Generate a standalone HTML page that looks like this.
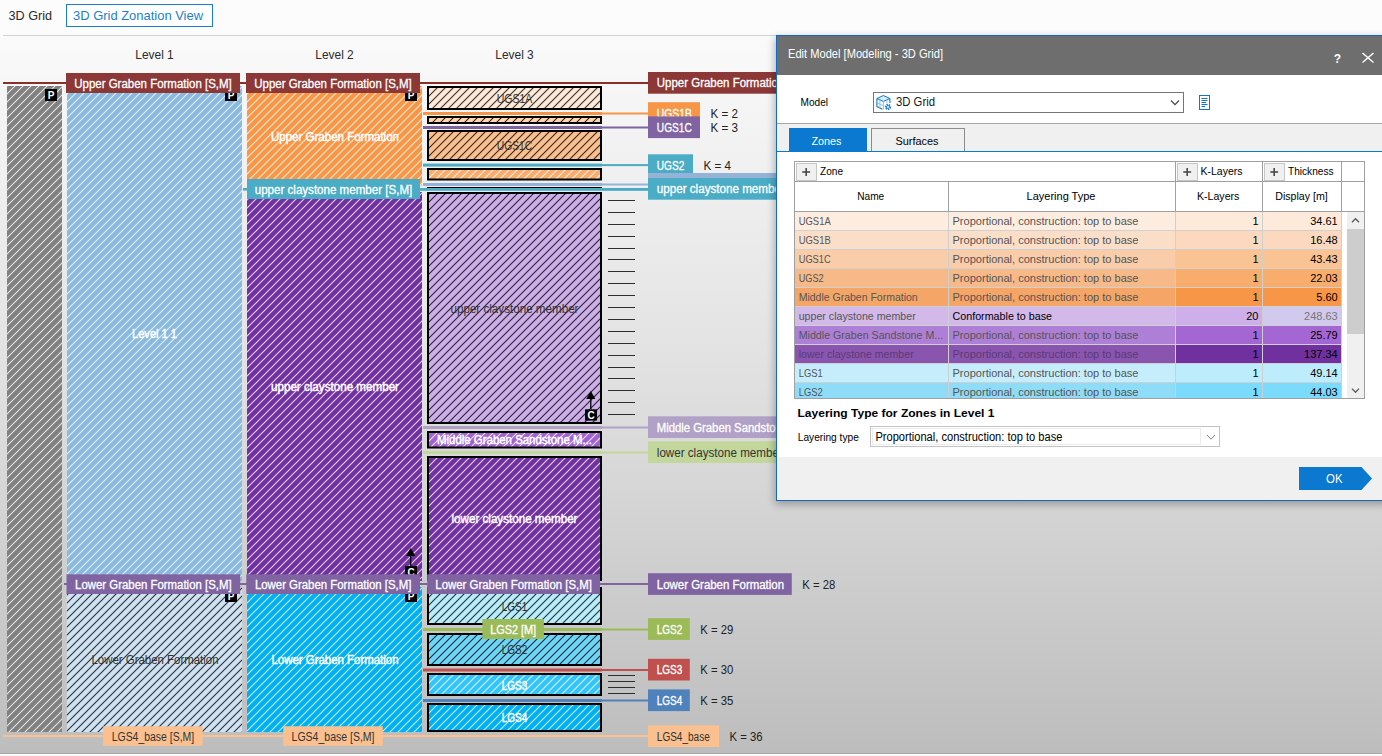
<!DOCTYPE html>
<html lang="en"><head><meta charset="utf-8"><title>3D Grid Zonation View</title>
<style>html,body{margin:0;padding:0;background:#fff;overflow:hidden}svg{display:block;font-family:'Liberation Sans', sans-serif}</style>
</head><body>
<svg width="1382" height="756" viewBox="0 0 1382 756">
<defs>
<linearGradient id="bg" x1="0" y1="0" x2="0" y2="1"><stop offset="0" stop-color="#fafafa"/><stop offset="0.45" stop-color="#e2e2e2"/><stop offset="1" stop-color="#bdbdbd"/></linearGradient>
<pattern id="hw8" width="8" height="8" patternUnits="userSpaceOnUse">
<line x1="8" y1="-8" x2="-16" y2="16" stroke="#ffffff" stroke-width="1.15" stroke-opacity="0.76"/>
<line x1="16" y1="-8" x2="-8" y2="16" stroke="#ffffff" stroke-width="1.15" stroke-opacity="0.76"/>
<line x1="24" y1="-8" x2="0" y2="16" stroke="#ffffff" stroke-width="1.15" stroke-opacity="0.76"/>
</pattern>
<pattern id="hb8" width="8" height="8" patternUnits="userSpaceOnUse">
<line x1="8" y1="-8" x2="-16" y2="16" stroke="#000000" stroke-width="1.1" stroke-opacity="0.8"/>
<line x1="16" y1="-8" x2="-8" y2="16" stroke="#000000" stroke-width="1.1" stroke-opacity="0.8"/>
<line x1="24" y1="-8" x2="0" y2="16" stroke="#000000" stroke-width="1.1" stroke-opacity="0.8"/>
</pattern>
<filter id="sh" x="-5%" y="-5%" width="110%" height="115%"><feGaussianBlur stdDeviation="4"/></filter>
</defs>
<rect x="0" y="0" width="1382" height="756" fill="#fcfcfc" />
<text x="8.5" y="20" font-size="13" fill="#2b2b2b" textLength="43.5" lengthAdjust="spacingAndGlyphs">3D Grid</text>
<rect x="66.5" y="4.5" width="146" height="22" fill="#fff" stroke="#1a7fd2"/>
<text x="73" y="20" font-size="13" fill="#1a7fd2" textLength="130" lengthAdjust="spacingAndGlyphs">3D Grid Zonation View</text>
<rect x="0" y="36" width="1382" height="718" fill="url(#bg)" />
<line x1="3" y1="35.5" x2="1382" y2="35.5" stroke="#d2d2d2" stroke-width="1" />
<line x1="0" y1="753.5" x2="1382" y2="753.5" stroke="#a8a8a8" stroke-width="1" />
<text x="154.5" y="59" font-size="13" fill="#2b2b2b" text-anchor="middle" textLength="38.5" lengthAdjust="spacingAndGlyphs">Level 1</text>
<text x="334.5" y="59" font-size="13" fill="#2b2b2b" text-anchor="middle" textLength="38.5" lengthAdjust="spacingAndGlyphs">Level 2</text>
<text x="514.5" y="59" font-size="13" fill="#2b2b2b" text-anchor="middle" textLength="38.5" lengthAdjust="spacingAndGlyphs">Level 3</text>
<rect x="3" y="82" width="645" height="2" fill="#8b2f2d" />
<rect x="64" y="583" width="584" height="2" fill="#8064a2" />
<rect x="3" y="735" width="645" height="2" fill="#fac090" />
<rect x="243" y="188" width="405" height="2.6" fill="#4bacc6" />
<g transform="translate(7,86)">
<rect x="0" y="0" width="55" height="646" fill="#808080" />
<rect x="0" y="0" width="55" height="646" fill="url(#hw8)" />
</g>
<rect x="45" y="89" width="12" height="12" fill="#000" />
<text x="51" y="99" font-size="10" fill="#fff" text-anchor="middle" font-weight="bold">P</text>
<g transform="translate(67,86)">
<rect x="0" y="0" width="175" height="495" fill="#8ab9df" />
<rect x="0" y="0" width="175" height="495" fill="url(#hw8)" />
</g>
<g transform="translate(67,587)">
<rect x="0" y="0" width="175" height="145" fill="#cfe2f3" />
<rect x="0" y="0" width="175" height="145" fill="url(#hb8)" />
</g>
<rect x="225" y="89" width="12" height="12" fill="#000" />
<text x="231" y="99" font-size="10" fill="#fff" text-anchor="middle" font-weight="bold">P</text>
<rect x="225" y="590" width="12" height="12" fill="#000" />
<text x="231" y="600" font-size="10" fill="#fff" text-anchor="middle" font-weight="bold">P</text>
<text x="154.5" y="337.5" font-size="12" fill="#fff" text-anchor="middle" textLength="45" lengthAdjust="spacingAndGlyphs" stroke="#fff" stroke-width="0.45">Level 1 1</text>
<text x="155" y="664" font-size="12" fill="#333" text-anchor="middle" textLength="127" lengthAdjust="spacingAndGlyphs">Lower Graben Formation</text>
<g transform="translate(247,86)">
<rect x="0" y="0" width="175" height="99.5" fill="#f79646" />
<rect x="0" y="0" width="175" height="99.5" fill="url(#hw8)" />
</g>
<g transform="translate(247,192)">
<rect x="0" y="0" width="175" height="389" fill="#7030a0" />
<rect x="0" y="0" width="175" height="389" fill="url(#hw8)" />
</g>
<g transform="translate(247,587)">
<rect x="0" y="0" width="175" height="145" fill="#00b0f0" />
<rect x="0" y="0" width="175" height="145" fill="url(#hw8)" />
</g>
<rect x="405" y="89" width="12" height="12" fill="#000" />
<text x="411" y="99" font-size="10" fill="#fff" text-anchor="middle" font-weight="bold">P</text>
<rect x="405" y="590" width="12" height="12" fill="#000" />
<text x="411" y="600" font-size="10" fill="#fff" text-anchor="middle" font-weight="bold">P</text>
<line x1="410.7" y1="554" x2="410.7" y2="566" stroke="#000" stroke-width="1.3" />
<path d="M410.7,548 L415.3,556 L406.09999999999997,556 Z" fill="#000"/>
<rect x="405" y="566" width="12" height="12" fill="#000" />
<text x="411" y="576" font-size="10" fill="#fff" text-anchor="middle" font-weight="bold">C</text>
<text x="335" y="141" font-size="12" fill="#fff" text-anchor="middle" textLength="128" lengthAdjust="spacingAndGlyphs" stroke="#fff" stroke-width="0.45">Upper Graben Formation</text>
<text x="335" y="391" font-size="12" fill="#fff" text-anchor="middle" textLength="128" lengthAdjust="spacingAndGlyphs" stroke="#fff" stroke-width="0.45">upper claystone member</text>
<text x="335" y="664" font-size="12" fill="#fff" text-anchor="middle" textLength="127" lengthAdjust="spacingAndGlyphs" stroke="#fff" stroke-width="0.45">Lower Graben Formation</text>
<rect x="423" y="112" width="179" height="3" fill="#f79646" />
<rect x="602" y="112.5" width="46" height="2" fill="#f79646" />
<rect x="423" y="126" width="179" height="3" fill="#8064a2" />
<rect x="602" y="126.5" width="46" height="2" fill="#8064a2" />
<rect x="423" y="163.6" width="179" height="3" fill="#4bacc6" />
<rect x="602" y="164.1" width="46" height="2" fill="#4bacc6" />
<rect x="423" y="183" width="179" height="3" fill="#95b3d7" />
<rect x="602" y="183.5" width="46" height="2" fill="#95b3d7" />
<rect x="423" y="426" width="179" height="3" fill="#b2a1c7" />
<rect x="602" y="426.5" width="46" height="2" fill="#b2a1c7" />
<rect x="423" y="451" width="179" height="3" fill="#c3d69b" />
<rect x="602" y="451.5" width="46" height="2" fill="#c3d69b" />
<rect x="423" y="628" width="179" height="3" fill="#9bbb59" />
<rect x="602" y="628.5" width="46" height="2" fill="#9bbb59" />
<rect x="423" y="668.5" width="179" height="3" fill="#c0504d" />
<rect x="602" y="669.0" width="46" height="2" fill="#c0504d" />
<rect x="423" y="699" width="179" height="3" fill="#4f81bd" />
<rect x="602" y="699.5" width="46" height="2" fill="#4f81bd" />
<g transform="translate(429,88)">
<rect x="-1" y="-1" width="173" height="22" fill="#fde9d9" />
<rect x="-1" y="-1" width="173" height="22" fill="url(#hb8)" />
<rect x="-1" y="-1" width="173" height="22" fill="none" stroke="#000" stroke-width="2"/>
</g>
<g transform="translate(429,118)">
<rect x="-1" y="-1" width="173" height="6" fill="#fcd5b4" />
<rect x="-1" y="-1" width="173" height="6" fill="url(#hb8)" />
<rect x="-1" y="-1" width="173" height="6" fill="none" stroke="#000" stroke-width="2"/>
</g>
<g transform="translate(429,132)">
<rect x="-1" y="-1" width="173" height="29" fill="#fabf8f" />
<rect x="-1" y="-1" width="173" height="29" fill="url(#hb8)" />
<rect x="-1" y="-1" width="173" height="29" fill="none" stroke="#000" stroke-width="2"/>
</g>
<g transform="translate(429,170)">
<rect x="-1" y="-1" width="173" height="10.5" fill="#f9ad6b" />
<rect x="-1" y="-1" width="173" height="10.5" fill="url(#hw8)" />
<rect x="-1" y="-1" width="173" height="10.5" fill="none" stroke="#000" stroke-width="2"/>
</g>
<rect x="427" y="187" width="175" height="1.5" fill="#000" />
<rect x="420" y="188" width="228" height="2.6" fill="#4bacc6" />
<g transform="translate(429,194)">
<rect x="-1" y="-1" width="173" height="230" fill="#ccaee8" />
<rect x="-1" y="-1" width="173" height="230" fill="url(#hb8)" />
<rect x="-1" y="-1" width="173" height="230" fill="none" stroke="#000" stroke-width="2"/>
</g>
<g transform="translate(429,433)">
<rect x="-1" y="-1" width="173" height="15.5" fill="#a163d1" />
<rect x="-1" y="-1" width="173" height="15.5" fill="url(#hw8)" />
<rect x="-1" y="-1" width="173" height="15.5" fill="none" stroke="#000" stroke-width="2"/>
</g>
<g transform="translate(429,458)">
<rect x="-1" y="-1" width="173" height="123" fill="#7030a0" />
<rect x="-1" y="-1" width="173" height="123" fill="url(#hw8)" />
<rect x="-1" y="-1" width="173" height="123" fill="none" stroke="#000" stroke-width="2"/>
</g>
<g transform="translate(429,589)">
<rect x="-1" y="-1" width="173" height="36" fill="#b7ecfb" />
<rect x="-1" y="-1" width="173" height="36" fill="url(#hb8)" />
<rect x="-1" y="-1" width="173" height="36" fill="none" stroke="#000" stroke-width="2"/>
</g>
<g transform="translate(429,635)">
<rect x="-1" y="-1" width="173" height="31" fill="#6dd5f7" />
<rect x="-1" y="-1" width="173" height="31" fill="url(#hb8)" />
<rect x="-1" y="-1" width="173" height="31" fill="none" stroke="#000" stroke-width="2"/>
</g>
<g transform="translate(429,675)">
<rect x="-1" y="-1" width="173" height="21" fill="#33c4f8" />
<rect x="-1" y="-1" width="173" height="21" fill="url(#hw8)" />
<rect x="-1" y="-1" width="173" height="21" fill="none" stroke="#000" stroke-width="2"/>
</g>
<g transform="translate(429,705)">
<rect x="-1" y="-1" width="173" height="27" fill="#00b0f0" />
<rect x="-1" y="-1" width="173" height="27" fill="url(#hw8)" />
<rect x="-1" y="-1" width="173" height="27" fill="none" stroke="#000" stroke-width="2"/>
</g>
<line x1="590.8" y1="397" x2="590.8" y2="409" stroke="#000" stroke-width="1.3" />
<path d="M590.8,391 L595.4,399 L586.1999999999999,399 Z" fill="#000"/>
<rect x="585" y="409.3" width="12" height="11.3" fill="#000" />
<text x="591" y="419.3" font-size="10" fill="#fff" text-anchor="middle" font-weight="bold">C</text>
<text x="514.5" y="102.6" font-size="12" fill="#333" text-anchor="middle" textLength="35.5" lengthAdjust="spacingAndGlyphs">UGS1A</text>
<text x="514.5" y="149.6" font-size="12" fill="#333" text-anchor="middle" textLength="35.5" lengthAdjust="spacingAndGlyphs">UGS1C</text>
<text x="514.5" y="313" font-size="12" fill="#333" text-anchor="middle" textLength="128" lengthAdjust="spacingAndGlyphs">upper claystone member</text>
<text x="514.5" y="444" font-size="12" fill="#fff" text-anchor="middle" textLength="155" lengthAdjust="spacingAndGlyphs" stroke="#fff" stroke-width="0.45">Middle Graben Sandstone M...</text>
<text x="514.5" y="523" font-size="12" fill="#fff" text-anchor="middle" textLength="126" lengthAdjust="spacingAndGlyphs" stroke="#fff" stroke-width="0.45">lower claystone member</text>
<text x="514.5" y="611" font-size="12" fill="#333" text-anchor="middle" textLength="25.5" lengthAdjust="spacingAndGlyphs">LGS1</text>
<text x="514.5" y="654" font-size="12" fill="#333" text-anchor="middle" textLength="25.5" lengthAdjust="spacingAndGlyphs">LGS2</text>
<text x="514.5" y="689.6" font-size="12" fill="#fff" text-anchor="middle" textLength="25.5" lengthAdjust="spacingAndGlyphs" stroke="#fff" stroke-width="0.45">LGS3</text>
<text x="514.5" y="721.6" font-size="12" fill="#fff" text-anchor="middle" textLength="25.5" lengthAdjust="spacingAndGlyphs" stroke="#fff" stroke-width="0.45">LGS4</text>
<line x1="608" y1="200.5" x2="635" y2="200.5" stroke="#2e2e2e" stroke-width="1" />
<line x1="608" y1="212.5" x2="635" y2="212.5" stroke="#2e2e2e" stroke-width="1" />
<line x1="608" y1="224.5" x2="635" y2="224.5" stroke="#2e2e2e" stroke-width="1" />
<line x1="608" y1="236.5" x2="635" y2="236.5" stroke="#2e2e2e" stroke-width="1" />
<line x1="608" y1="248.5" x2="635" y2="248.5" stroke="#2e2e2e" stroke-width="1" />
<line x1="608" y1="259.5" x2="635" y2="259.5" stroke="#2e2e2e" stroke-width="1" />
<line x1="608" y1="271.5" x2="635" y2="271.5" stroke="#2e2e2e" stroke-width="1" />
<line x1="608" y1="283.5" x2="635" y2="283.5" stroke="#2e2e2e" stroke-width="1" />
<line x1="608" y1="295.5" x2="635" y2="295.5" stroke="#2e2e2e" stroke-width="1" />
<line x1="608" y1="307.5" x2="635" y2="307.5" stroke="#2e2e2e" stroke-width="1" />
<line x1="608" y1="319.5" x2="635" y2="319.5" stroke="#2e2e2e" stroke-width="1" />
<line x1="608" y1="331.5" x2="635" y2="331.5" stroke="#2e2e2e" stroke-width="1" />
<line x1="608" y1="343.5" x2="635" y2="343.5" stroke="#2e2e2e" stroke-width="1" />
<line x1="608" y1="355.5" x2="635" y2="355.5" stroke="#2e2e2e" stroke-width="1" />
<line x1="608" y1="367.5" x2="635" y2="367.5" stroke="#2e2e2e" stroke-width="1" />
<line x1="608" y1="378.5" x2="635" y2="378.5" stroke="#2e2e2e" stroke-width="1" />
<line x1="608" y1="390.5" x2="635" y2="390.5" stroke="#2e2e2e" stroke-width="1" />
<line x1="608" y1="402.5" x2="635" y2="402.5" stroke="#2e2e2e" stroke-width="1" />
<line x1="608" y1="414.5" x2="635" y2="414.5" stroke="#2e2e2e" stroke-width="1" />
<line x1="608" y1="675.5" x2="635" y2="675.5" stroke="#2e2e2e" stroke-width="1" />
<line x1="608" y1="681.5" x2="635" y2="681.5" stroke="#2e2e2e" stroke-width="1" />
<line x1="608" y1="687.5" x2="635" y2="687.5" stroke="#2e2e2e" stroke-width="1" />
<line x1="608" y1="693.5" x2="635" y2="693.5" stroke="#2e2e2e" stroke-width="1" />
<rect x="66" y="73" width="174" height="20" fill="#8c3836" />
<text x="153.0" y="88.3" font-size="12" fill="#fff" text-anchor="middle" textLength="157.5" lengthAdjust="spacingAndGlyphs" stroke="#fff" stroke-width="0.3">Upper Graben Formation [S,M]</text>
<rect x="246" y="73" width="174" height="20" fill="#8c3836" />
<text x="333.0" y="88.3" font-size="12" fill="#fff" text-anchor="middle" textLength="157.5" lengthAdjust="spacingAndGlyphs" stroke="#fff" stroke-width="0.3">Upper Graben Formation [S,M]</text>
<rect x="247" y="179" width="173" height="20" fill="#4bacc6" />
<text x="333.5" y="194.3" font-size="12" fill="#fff" text-anchor="middle" textLength="157.5" lengthAdjust="spacingAndGlyphs" stroke="#fff" stroke-width="0.3">upper claystone member [S,M]</text>
<rect x="66.5" y="574.3" width="173.7" height="19.7" fill="#8064a2" />
<text x="153.35" y="589.4499999999999" font-size="12" fill="#fff" text-anchor="middle" textLength="156.5" lengthAdjust="spacingAndGlyphs" stroke="#fff" stroke-width="0.3">Lower Graben Formation [S,M]</text>
<rect x="246.3" y="574.3" width="173.7" height="19.7" fill="#8064a2" />
<text x="333.15" y="589.4499999999999" font-size="12" fill="#fff" text-anchor="middle" textLength="156.5" lengthAdjust="spacingAndGlyphs" stroke="#fff" stroke-width="0.3">Lower Graben Formation [S,M]</text>
<rect x="427.2" y="574.3" width="172.8" height="19.7" fill="#8064a2" />
<text x="513.6" y="589.4499999999999" font-size="12" fill="#fff" text-anchor="middle" textLength="156.5" lengthAdjust="spacingAndGlyphs" stroke="#fff" stroke-width="0.3">Lower Graben Formation [S,M]</text>
<rect x="482.4" y="619" width="61.5" height="20" fill="#9bbb59" />
<text x="513.15" y="634.3" font-size="12" fill="#fff" text-anchor="middle" textLength="46" lengthAdjust="spacingAndGlyphs" stroke="#fff" stroke-width="0.3">LGS2 [M]</text>
<rect x="103.2" y="726.3" width="99.5" height="19.5" fill="#fac090" />
<text x="152.95" y="741.3499999999999" font-size="12" fill="#333" text-anchor="middle" textLength="82.5" lengthAdjust="spacingAndGlyphs">LGS4_base [S,M]</text>
<rect x="283.3" y="726.3" width="99.5" height="19.5" fill="#fac090" />
<text x="333.05" y="741.3499999999999" font-size="12" fill="#333" text-anchor="middle" textLength="83" lengthAdjust="spacingAndGlyphs">LGS4_base [S,M]</text>
<rect x="648" y="72" width="146" height="21.7" fill="#8c3836" />
<text x="656.8" y="87.3" font-size="12" fill="#fff" textLength="127.5" lengthAdjust="spacingAndGlyphs" stroke="#fff" stroke-width="0.3">Upper Graben Formation</text>
<rect x="648" y="102.2" width="52" height="21.7" fill="#f79646" />
<text x="656.8" y="117.5" font-size="12" fill="#fff" textLength="35" lengthAdjust="spacingAndGlyphs" stroke="#fff" stroke-width="0.3">UGS1B</text>
<text x="710.5" y="117.5" font-size="12" fill="#222" textLength="27.5" lengthAdjust="spacingAndGlyphs">K = 2</text>
<rect x="648" y="116.4" width="52" height="21.7" fill="#8064a2" />
<text x="656.8" y="131.70000000000002" font-size="12" fill="#fff" textLength="35" lengthAdjust="spacingAndGlyphs" stroke="#fff" stroke-width="0.3">UGS1C</text>
<text x="710.5" y="131.70000000000002" font-size="12" fill="#222" textLength="27.5" lengthAdjust="spacingAndGlyphs">K = 3</text>
<rect x="648" y="154.3" width="45" height="21.7" fill="#4bacc6" />
<text x="656.8" y="169.60000000000002" font-size="12" fill="#fff" textLength="27.5" lengthAdjust="spacingAndGlyphs" stroke="#fff" stroke-width="0.3">UGS2</text>
<text x="703.5" y="169.60000000000002" font-size="12" fill="#222" textLength="27.5" lengthAdjust="spacingAndGlyphs">K = 4</text>
<rect x="648" y="173" width="146" height="21.7" fill="#95b3d7" />
<text x="656.8" y="188.3" font-size="12" fill="#fff" textLength="131" lengthAdjust="spacingAndGlyphs" stroke="#fff" stroke-width="0.3">Middle Graben Formation</text>
<rect x="648" y="178" width="146" height="21.7" fill="#4bacc6" />
<text x="656.8" y="193.3" font-size="12" fill="#fff" textLength="128" lengthAdjust="spacingAndGlyphs" stroke="#fff" stroke-width="0.3">upper claystone member</text>
<rect x="648" y="416.3" width="170" height="21.7" fill="#b2a1c7" />
<text x="656.8" y="431.6" font-size="12" fill="#fff" textLength="176" lengthAdjust="spacingAndGlyphs" stroke="#fff" stroke-width="0.3">Middle Graben Sandstone Member</text>
<rect x="648" y="441.2" width="146" height="21.7" fill="#c3d69b" />
<text x="656.8" y="456.5" font-size="12" fill="#333" textLength="126" lengthAdjust="spacingAndGlyphs">lower claystone member</text>
<rect x="648" y="573.2" width="143.8" height="21.7" fill="#8064a2" />
<text x="656.8" y="588.5" font-size="12" fill="#fff" textLength="127.3" lengthAdjust="spacingAndGlyphs" stroke="#fff" stroke-width="0.3">Lower Graben Formation</text>
<text x="802.3" y="588.5" font-size="12" fill="#222" textLength="33" lengthAdjust="spacingAndGlyphs">K = 28</text>
<rect x="648" y="618.2" width="41.8" height="21.7" fill="#9bbb59" />
<text x="656.8" y="633.5" font-size="12" fill="#fff" textLength="25.5" lengthAdjust="spacingAndGlyphs" stroke="#fff" stroke-width="0.3">LGS2</text>
<text x="700.3" y="633.5" font-size="12" fill="#222" textLength="33" lengthAdjust="spacingAndGlyphs">K = 29</text>
<rect x="648" y="658.8" width="41.8" height="21.7" fill="#c0504d" />
<text x="656.8" y="674.0999999999999" font-size="12" fill="#fff" textLength="25.5" lengthAdjust="spacingAndGlyphs" stroke="#fff" stroke-width="0.3">LGS3</text>
<text x="700.3" y="674.0999999999999" font-size="12" fill="#222" textLength="33" lengthAdjust="spacingAndGlyphs">K = 30</text>
<rect x="648" y="689.4" width="41.8" height="21.7" fill="#4f81bd" />
<text x="656.8" y="704.6999999999999" font-size="12" fill="#fff" textLength="25.5" lengthAdjust="spacingAndGlyphs" stroke="#fff" stroke-width="0.3">LGS4</text>
<text x="700.3" y="704.6999999999999" font-size="12" fill="#222" textLength="33" lengthAdjust="spacingAndGlyphs">K = 35</text>
<rect x="648" y="725.3" width="71" height="21.7" fill="#fac090" />
<text x="656.8" y="740.5999999999999" font-size="12" fill="#333" textLength="53" lengthAdjust="spacingAndGlyphs">LGS4_base</text>
<text x="729.5" y="740.5999999999999" font-size="12" fill="#222" textLength="33" lengthAdjust="spacingAndGlyphs">K = 36</text>
<rect x="775" y="38" width="640" height="466" fill="#000" opacity="0.3" filter="url(#sh)"/>
<rect x="776" y="35" width="640" height="466" fill="#1169c2" />
<rect x="777" y="36" width="640" height="39" fill="#6e6e6e" />
<text x="788" y="58.2" font-size="13" fill="#fff" textLength="155" lengthAdjust="spacingAndGlyphs">Edit Model [Modeling - 3D Grid]</text>
<text x="1337.5" y="62.5" font-size="12" fill="#fff" text-anchor="middle" font-weight="bold">?</text>
<path d="M1362.5,53 L1373.5,62.5 M1373.5,53 L1362.5,62.5" stroke="#fff" stroke-width="1.5" fill="none"/>
<rect x="777" y="75" width="640" height="48" fill="#fff" />
<text x="800.5" y="106" font-size="11" fill="#000" textLength="27.5" lengthAdjust="spacingAndGlyphs">Model</text>
<rect x="873.5" y="92.5" width="310" height="20" fill="#fff" stroke="#767676"/>
<g fill="none" stroke-linejoin="round" transform="translate(-0.6,0)"><path d="M884,95.5 L890.5,98.5 L884,101.5 L877.5,98.5 Z" fill="#dcebf8" stroke="#0a79cf" stroke-width="1"/><path d="M877.5,98.5 L877.5,106.5 L883,109.3" stroke="#0a79cf" stroke-width="1.1"/><path d="M890.5,98.5 L890.5,103" stroke="#0a79cf" stroke-width="1.1"/><path d="M884,101.5 L884,109.5 M880.5,100.5 L880.5,108 M877.5,102.8 L884,105.8 M887.5,100.2 L887.5,103.5" stroke="#7fbdee" stroke-width="0.9"/><circle cx="888.6" cy="107" r="2.4" stroke="#0a79cf" stroke-width="1.5" stroke-dasharray="1.25 0.95"/><circle cx="888.6" cy="107" r="1.5" stroke="#0a79cf" stroke-width="0.9"/></g>
<text x="896" y="106.3" font-size="12" fill="#1a1a1a" textLength="39" lengthAdjust="spacingAndGlyphs">3D Grid</text>
<path d="M1171,100.5 L1175,104.7 L1179,100.5" stroke="#444" stroke-width="1.2" fill="none"/>
<rect x="1199.5" y="95.5" width="10" height="14" fill="#fff" stroke="#0a79cf" stroke-width="1"/>
<line x1="1201.5" y1="98.5" x2="1207.5" y2="98.5" stroke="#0a79cf" stroke-width="1" />
<line x1="1201.5" y1="100.5" x2="1207.5" y2="100.5" stroke="#0a79cf" stroke-width="1" />
<line x1="1201.5" y1="102.5" x2="1206" y2="102.5" stroke="#0a79cf" stroke-width="1" />
<line x1="1201.5" y1="104.5" x2="1207.5" y2="104.5" stroke="#0a79cf" stroke-width="1" />
<line x1="1201.5" y1="106.5" x2="1205" y2="106.5" stroke="#0a79cf" stroke-width="1" />
<rect x="777" y="123" width="640" height="29" fill="#f0f0f0" />
<line x1="777" y1="123.5" x2="1382" y2="123.5" stroke="#a6a6a6" stroke-width="1" />
<rect x="789" y="128" width="78" height="23" fill="#0a79cf" />
<text x="826.5" y="144.6" font-size="11" fill="#fff" text-anchor="middle" textLength="30" lengthAdjust="spacingAndGlyphs">Zones</text>
<rect x="871.5" y="128.5" width="93" height="23" fill="#f0f0f0" stroke="#8c8c8c"/>
<text x="917" y="144.6" font-size="11" fill="#000" text-anchor="middle" textLength="43" lengthAdjust="spacingAndGlyphs">Surfaces</text>
<rect x="777" y="151" width="640" height="1" fill="#0a79cf" />
<rect x="777" y="152" width="640" height="305" fill="#fff" />
<rect x="777" y="457" width="640" height="43" fill="#f0f0f0" />
<clipPath id="tc"><rect x="795" y="162" width="569" height="236.5"/></clipPath>
<g clip-path="url(#tc)">
<rect x="795" y="212" width="380.5" height="19" fill="#fdede0" />
<rect x="1175.5" y="212" width="166.0" height="19" fill="#fdeada" />
<line x1="795" y1="230.5" x2="1341.5" y2="230.5" stroke="#d0d0d0" stroke-width="1" />
<text x="798.7" y="224.7" font-size="11" fill="#555" textLength="32" lengthAdjust="spacingAndGlyphs">UGS1A</text>
<text x="952.5" y="224.7" font-size="11" fill="#555" textLength="186" lengthAdjust="spacingAndGlyphs">Proportional, construction: top to base</text>
<text x="1258.5" y="224.7" font-size="11" fill="#000" text-anchor="end">1</text>
<text x="1337.7" y="224.7" font-size="11" fill="#000" text-anchor="end">34.61</text>
<rect x="795" y="231" width="380.5" height="19" fill="#fbdec8" />
<rect x="1175.5" y="231" width="166.0" height="19" fill="#fcd9be" />
<line x1="795" y1="249.5" x2="1341.5" y2="249.5" stroke="#d0d0d0" stroke-width="1" />
<text x="798.7" y="243.7" font-size="11" fill="#555" textLength="32" lengthAdjust="spacingAndGlyphs">UGS1B</text>
<text x="952.5" y="243.7" font-size="11" fill="#555" textLength="186" lengthAdjust="spacingAndGlyphs">Proportional, construction: top to base</text>
<text x="1258.5" y="243.7" font-size="11" fill="#000" text-anchor="end">1</text>
<text x="1337.7" y="243.7" font-size="11" fill="#000" text-anchor="end">16.48</text>
<rect x="795" y="250" width="380.5" height="19" fill="#f9cda9" />
<rect x="1175.5" y="250" width="166.0" height="19" fill="#fac394" />
<line x1="795" y1="268.5" x2="1341.5" y2="268.5" stroke="#d0d0d0" stroke-width="1" />
<text x="798.7" y="262.7" font-size="11" fill="#555" textLength="32" lengthAdjust="spacingAndGlyphs">UGS1C</text>
<text x="952.5" y="262.7" font-size="11" fill="#555" textLength="186" lengthAdjust="spacingAndGlyphs">Proportional, construction: top to base</text>
<text x="1258.5" y="262.7" font-size="11" fill="#000" text-anchor="end">1</text>
<text x="1337.7" y="262.7" font-size="11" fill="#000" text-anchor="end">43.43</text>
<rect x="795" y="269" width="380.5" height="19" fill="#f7b988" />
<rect x="1175.5" y="269" width="166.0" height="19" fill="#f9ad6d" />
<line x1="795" y1="287.5" x2="1341.5" y2="287.5" stroke="#d0d0d0" stroke-width="1" />
<text x="798.7" y="281.7" font-size="11" fill="#555" textLength="25" lengthAdjust="spacingAndGlyphs">UGS2</text>
<text x="952.5" y="281.7" font-size="11" fill="#555" textLength="186" lengthAdjust="spacingAndGlyphs">Proportional, construction: top to base</text>
<text x="1258.5" y="281.7" font-size="11" fill="#000" text-anchor="end">1</text>
<text x="1337.7" y="281.7" font-size="11" fill="#000" text-anchor="end">22.03</text>
<rect x="795" y="288" width="380.5" height="19" fill="#f5a566" />
<rect x="1175.5" y="288" width="166.0" height="19" fill="#f79646" />
<line x1="795" y1="306.5" x2="1341.5" y2="306.5" stroke="#d0d0d0" stroke-width="1" />
<text x="798.7" y="300.7" font-size="11" fill="#555" textLength="119" lengthAdjust="spacingAndGlyphs">Middle Graben Formation</text>
<text x="952.5" y="300.7" font-size="11" fill="#555" textLength="186" lengthAdjust="spacingAndGlyphs">Proportional, construction: top to base</text>
<text x="1258.5" y="300.7" font-size="11" fill="#000" text-anchor="end">1</text>
<text x="1337.7" y="300.7" font-size="11" fill="#000" text-anchor="end">5.60</text>
<rect x="795" y="307" width="380.5" height="19" fill="#d3b8ea" />
<rect x="1175.5" y="307" width="166.0" height="19" fill="#cfafe9" />
<rect x="1262.5" y="307" width="79.0" height="19" fill="#d2c9ee" />
<line x1="795" y1="325.5" x2="1341.5" y2="325.5" stroke="#d0d0d0" stroke-width="1" />
<text x="798.7" y="319.7" font-size="11" fill="#555" textLength="117" lengthAdjust="spacingAndGlyphs">upper claystone member</text>
<text x="952.5" y="319.7" font-size="11" fill="#000" textLength="99.5" lengthAdjust="spacingAndGlyphs">Conformable to base</text>
<text x="1258.5" y="319.7" font-size="11" fill="#000" text-anchor="end">20</text>
<text x="1337.7" y="319.7" font-size="11" fill="#777" text-anchor="end">248.63</text>
<rect x="795" y="326" width="380.5" height="19" fill="#ae7fd6" />
<rect x="1175.5" y="326" width="166.0" height="19" fill="#a466d2" />
<line x1="795" y1="344.5" x2="1341.5" y2="344.5" stroke="#d0d0d0" stroke-width="1" />
<text x="798.7" y="338.7" font-size="11" fill="#555" textLength="144.5" lengthAdjust="spacingAndGlyphs">Middle Graben Sandstone M...</text>
<text x="952.5" y="338.7" font-size="11" fill="#555" textLength="186" lengthAdjust="spacingAndGlyphs">Proportional, construction: top to base</text>
<text x="1258.5" y="338.7" font-size="11" fill="#000" text-anchor="end">1</text>
<text x="1337.7" y="338.7" font-size="11" fill="#000" text-anchor="end">25.79</text>
<rect x="795" y="345" width="380.5" height="19" fill="#8a55ae" />
<rect x="1175.5" y="345" width="166.0" height="19" fill="#7030a0" />
<line x1="795" y1="363.5" x2="1341.5" y2="363.5" stroke="#d0d0d0" stroke-width="1" />
<text x="798.7" y="357.7" font-size="11" fill="#5a3a78" textLength="115" lengthAdjust="spacingAndGlyphs">lower claystone member</text>
<text x="952.5" y="357.7" font-size="11" fill="#5a3a78" textLength="186" lengthAdjust="spacingAndGlyphs">Proportional, construction: top to base</text>
<text x="1258.5" y="357.7" font-size="11" fill="#000" text-anchor="end">1</text>
<text x="1337.7" y="357.7" font-size="11" fill="#000" text-anchor="end">137.34</text>
<rect x="795" y="364" width="380.5" height="19" fill="#c5edfc" />
<rect x="1175.5" y="364" width="166.0" height="19" fill="#bdecfd" />
<line x1="795" y1="382.5" x2="1341.5" y2="382.5" stroke="#d0d0d0" stroke-width="1" />
<text x="798.7" y="376.7" font-size="11" fill="#555" textLength="24" lengthAdjust="spacingAndGlyphs">LGS1</text>
<text x="952.5" y="376.7" font-size="11" fill="#555" textLength="186" lengthAdjust="spacingAndGlyphs">Proportional, construction: top to base</text>
<text x="1258.5" y="376.7" font-size="11" fill="#000" text-anchor="end">1</text>
<text x="1337.7" y="376.7" font-size="11" fill="#000" text-anchor="end">49.14</text>
<rect x="795" y="383" width="380.5" height="19" fill="#8fdcf8" />
<rect x="1175.5" y="383" width="166.0" height="19" fill="#7adbfc" />
<line x1="795" y1="401.5" x2="1341.5" y2="401.5" stroke="#d0d0d0" stroke-width="1" />
<text x="798.7" y="395.7" font-size="11" fill="#555" textLength="24" lengthAdjust="spacingAndGlyphs">LGS2</text>
<text x="952.5" y="395.7" font-size="11" fill="#555" textLength="186" lengthAdjust="spacingAndGlyphs">Proportional, construction: top to base</text>
<text x="1258.5" y="395.7" font-size="11" fill="#000" text-anchor="end">1</text>
<text x="1337.7" y="395.7" font-size="11" fill="#000" text-anchor="end">44.03</text>
<line x1="948.5" y1="212" x2="948.5" y2="399" stroke="#cfcfcf" stroke-width="1" />
<line x1="1175.5" y1="212" x2="1175.5" y2="399" stroke="#cfcfcf" stroke-width="1" />
<line x1="1262.5" y1="212" x2="1262.5" y2="399" stroke="#cfcfcf" stroke-width="1" />
<line x1="1341.5" y1="212" x2="1341.5" y2="399" stroke="#cfcfcf" stroke-width="1" />
</g>
<line x1="794.5" y1="181.5" x2="1364.5" y2="181.5" stroke="#a0a0a0" stroke-width="1" />
<line x1="794.5" y1="211.5" x2="1364.5" y2="211.5" stroke="#a0a0a0" stroke-width="1" />
<line x1="1175.5" y1="162" x2="1175.5" y2="212" stroke="#a0a0a0" stroke-width="1" />
<line x1="1262.5" y1="162" x2="1262.5" y2="212" stroke="#a0a0a0" stroke-width="1" />
<line x1="1341.5" y1="162" x2="1341.5" y2="212" stroke="#a0a0a0" stroke-width="1" />
<line x1="948.5" y1="182" x2="948.5" y2="212" stroke="#a0a0a0" stroke-width="1" />
<rect x="794.5" y="161.5" width="570.0" height="237" fill="none" stroke="#a0a0a0"/>
<rect x="796.5" y="163.5" width="20" height="17" fill="#f0f0f0" stroke="#c6c6c6"/>
<line x1="802.3" y1="172" x2="810.1" y2="172" stroke="#4a4a4a" stroke-width="1.6" />
<line x1="806.2" y1="168.1" x2="806.2" y2="175.9" stroke="#4a4a4a" stroke-width="1.6" />
<rect x="1177.5" y="163.5" width="20" height="17" fill="#f0f0f0" stroke="#c6c6c6"/>
<line x1="1183.3" y1="172" x2="1191.1" y2="172" stroke="#4a4a4a" stroke-width="1.6" />
<line x1="1187.2" y1="168.1" x2="1187.2" y2="175.9" stroke="#4a4a4a" stroke-width="1.6" />
<rect x="1264.5" y="163.5" width="20" height="17" fill="#f0f0f0" stroke="#c6c6c6"/>
<line x1="1270.3" y1="172" x2="1278.1" y2="172" stroke="#4a4a4a" stroke-width="1.6" />
<line x1="1274.2" y1="168.1" x2="1274.2" y2="175.9" stroke="#4a4a4a" stroke-width="1.6" />
<text x="820" y="175.2" font-size="11" fill="#000" textLength="23" lengthAdjust="spacingAndGlyphs">Zone</text>
<text x="1200.5" y="175.2" font-size="11" fill="#000" textLength="42" lengthAdjust="spacingAndGlyphs">K-Layers</text>
<text x="1288" y="175.2" font-size="11" fill="#000" textLength="45.5" lengthAdjust="spacingAndGlyphs">Thickness</text>
<text x="870.7" y="200.2" font-size="11" fill="#000" text-anchor="middle" textLength="27" lengthAdjust="spacingAndGlyphs">Name</text>
<text x="1061" y="200.2" font-size="11" fill="#000" text-anchor="middle" textLength="69" lengthAdjust="spacingAndGlyphs">Layering Type</text>
<text x="1218.2" y="200.2" font-size="11" fill="#000" text-anchor="middle" textLength="42.3" lengthAdjust="spacingAndGlyphs">K-Layers</text>
<text x="1301.5" y="200.2" font-size="11" fill="#000" text-anchor="middle" textLength="52.5" lengthAdjust="spacingAndGlyphs">Display [m]</text>
<rect x="1347" y="212" width="17" height="186" fill="#f0f0f0" />
<rect x="1347" y="229" width="17" height="105" fill="#cdcdcd" />
<path d="M1352,222.3 L1355.5,218.7 L1359,222.3" stroke="#5a5a5a" stroke-width="1.3" fill="none"/>
<path d="M1352,388.6 L1355.5,392.2 L1359,388.6" stroke="#5a5a5a" stroke-width="1.3" fill="none"/>
<text x="797.5" y="416.7" font-size="11" fill="#000" textLength="197" lengthAdjust="spacingAndGlyphs" font-weight="bold">Layering Type for Zones in Level 1</text>
<text x="797.8" y="441" font-size="11" fill="#000" textLength="61" lengthAdjust="spacingAndGlyphs">Layering type</text>
<rect x="870.5" y="426.5" width="349" height="20" fill="#fff" stroke="#c2c2c2"/>
<rect x="872.5" y="428.5" width="328" height="16" fill="#fff" stroke="#ececec"/>
<text x="875.4" y="440.6" font-size="12" fill="#000" textLength="187" lengthAdjust="spacingAndGlyphs">Proportional, construction: top to base</text>
<path d="M1207,435 L1211,439.2 L1215,435" stroke="#808080" stroke-width="1" fill="none"/>
<path d="M1299,467 L1361.5,467 L1372,478.5 L1361.5,490 L1299,490 Z" fill="#0a79cf"/>
<text x="1334.3" y="483" font-size="12.5" fill="#fff" text-anchor="middle" textLength="16.5" lengthAdjust="spacingAndGlyphs">OK</text>
</svg>
</body></html>
